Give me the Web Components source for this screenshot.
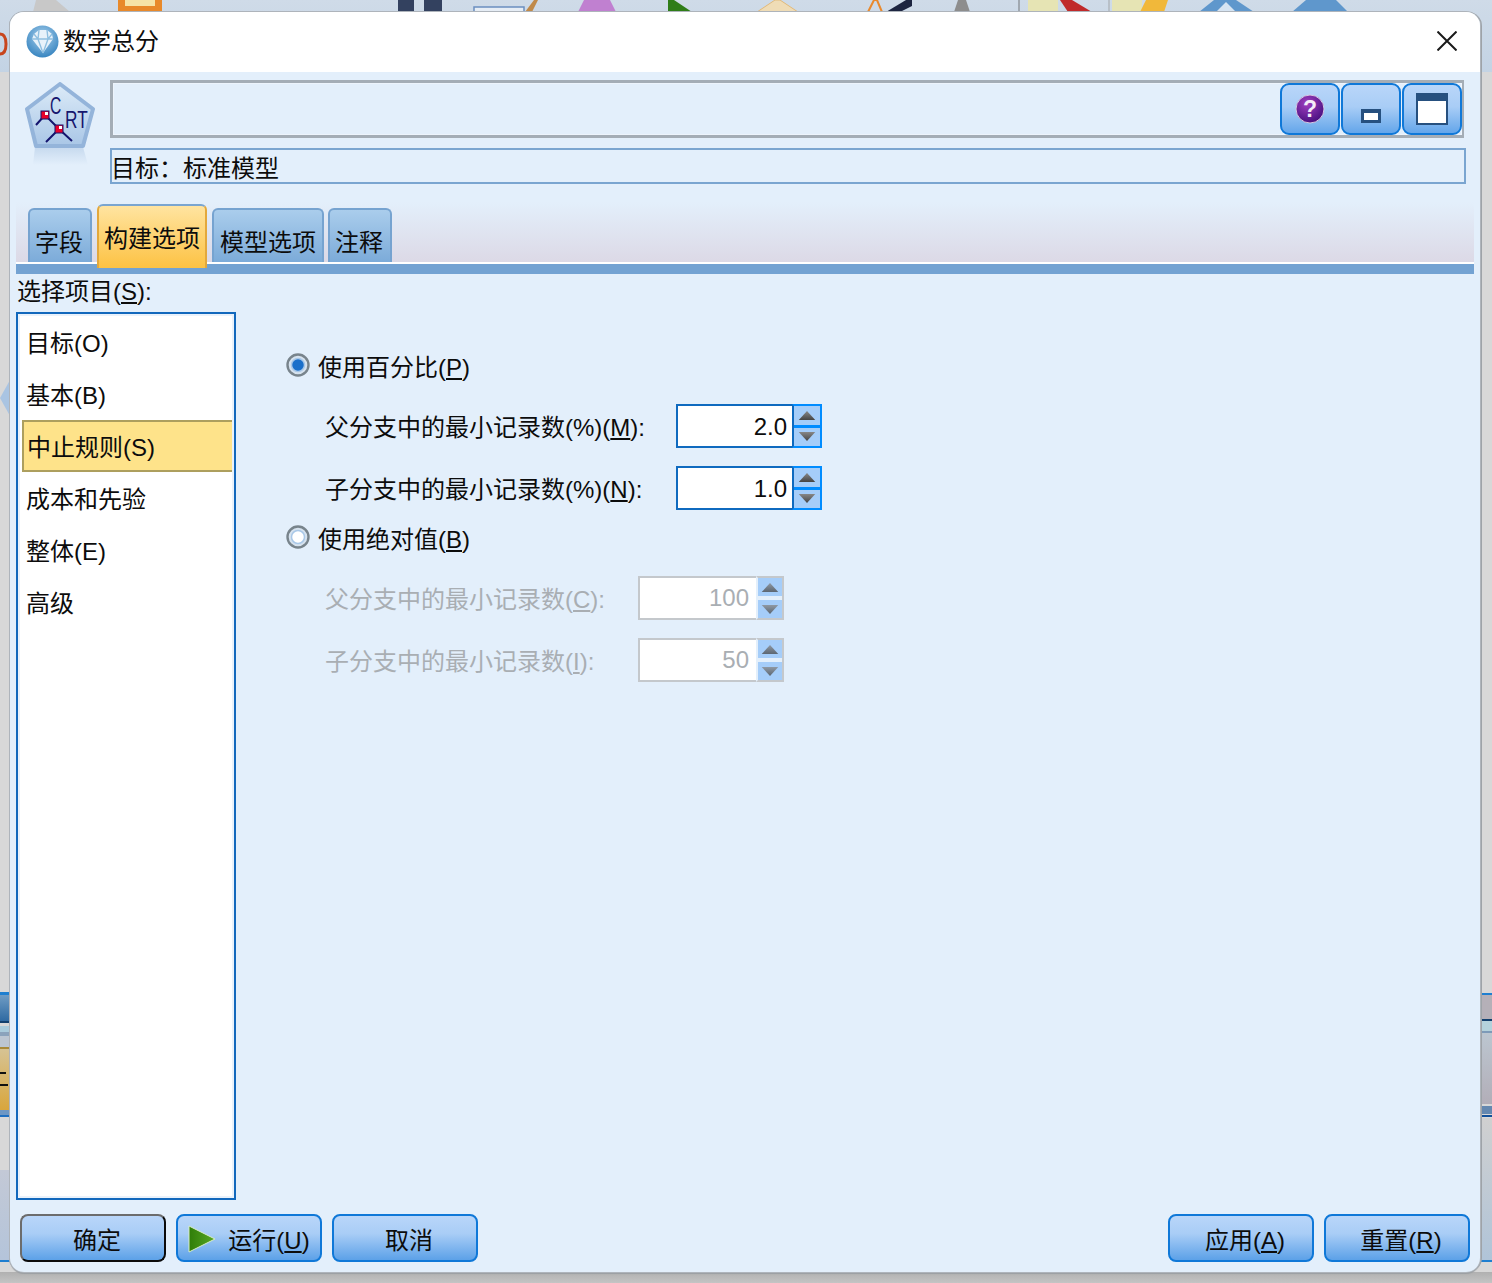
<!DOCTYPE html>
<html lang="zh">
<head>
<meta charset="utf-8">
<title>数学总分</title>
<style>
  html, body { margin: 0; height: 100%; }
  body {
    width: 1492px;
    height: 1283px;
    overflow: hidden;
    font: 24px/1.2 "Liberation Sans", "Noto Sans CJK SC", sans-serif;
    color: #0c0c0c;
  }
</style>
</head>
<body>

<app-desktop>
  <app-dialog heading="数学总分">
    <app-header slot="header" target="目标：标准模型"></app-header>
    <app-tabs slot="tabs">
      <app-tab style="padding:0 7px 0 5px">字段</app-tab>
      <app-tab active>构建选项</app-tab>
      <app-tab>模型选项</app-tab>
      <app-tab style="margin-left:-1px;padding:0 7px 0 5px">注释</app-tab>
    </app-tabs>

    <app-side-list slot="side">
      <span slot="label">选择项目(<u>S</u>):</span>
      <app-list-item>目标(O)</app-list-item>
      <app-list-item>基本(B)</app-list-item>
      <app-list-item selected>中止规则(S)</app-list-item>
      <app-list-item>成本和先验</app-list-item>
      <app-list-item>整体(E)</app-list-item>
      <app-list-item>高级</app-list-item>
    </app-side-list>

    <app-stop-rules slot="main">
      <app-radio checked>使用百分比(<u>P</u>)</app-radio>
      <app-field value="2.0" style="margin-top:22px">父分支中的最小记录数(%)(<u>M</u>):</app-field>
      <app-field value="1.0" style="margin-top:18px">子分支中的最小记录数(%)(<u>N</u>):</app-field>
      <app-radio style="margin-top:16px">使用绝对值(<u>B</u>)</app-radio>
      <app-field value="100" disabled style="margin-top:22px">父分支中的最小记录数(<u>C</u>):</app-field>
      <app-field value="50" disabled style="margin-top:18px">子分支中的最小记录数(<u>I</u>):</app-field>
    </app-stop-rules>

    <app-button slot="footer-left" default>确定</app-button>
    <app-button slot="footer-left" run>运行(<u>U</u>)</app-button>
    <app-button slot="footer-left">取消</app-button>
    <app-button slot="footer-right">应用(<u>A</u>)</app-button>
    <app-button slot="footer-right">重置(<u>R</u>)</app-button>
  </app-dialog>
</app-desktop>

<script>
// what is visible of the main window behind the dialog
const strip = (side, top, height, bg) =>
  `<div class="strip" style="${side}:0;top:${top}px;height:${height}px;background:${bg}"></div>`;

class AppDesktop extends HTMLElement {
  constructor() {
    super();
    this.attachShadow({ mode: "open" });
    this.shadowRoot.innerHTML = `
      <style>
        :host { display: block; position: relative; width: 1492px; height: 1283px; overflow: hidden;
          background: #d8d8d8; }
        .toolbar { position: absolute; left: 0; top: 0; width: 1492px; height: 72px;
          background: linear-gradient(#cfdbe8, #c3d3e4); }
        .bottom { position: absolute; left: 0; right: 0; top: 1272px; height: 11px; background: linear-gradient(#b0b0b0, #c4c4c4); }
        .strip { position: absolute; width: 12px; }
        .top-art { position: absolute; left: 0; top: 0; }
        ::slotted(*) { position: absolute; left: 10px; top: 12px; }
      </style>
      <div class="toolbar"></div>
      <div class="bottom"></div>
      ${strip("left", 992, 3, "#1f7fd0")}
      ${strip("left", 995, 26, "linear-gradient(#6f9cc4,#2f6aa2)")}
      ${strip("left", 1021, 2, "#12406e")}
      ${strip("left", 1026, 6, "#a9cbdc")}
      ${strip("left", 1032, 4, "#8ba3bc")}
      ${strip("left", 1036, 11, "#bcc6d2")}
      ${strip("left", 1047, 2, "#a98a3a")}
      ${strip("left", 1049, 61, "linear-gradient(#d6c394,#d9a63c)")}
      ${strip("left", 1110, 5, "#6d97c4")}
      ${strip("left", 1115, 2, "#1f6fc0")}
      ${strip("left", 1170, 90, "linear-gradient(#c3c9d6,#b4c4da)")}
      ${strip("left", 1260, 2, "#1f7fd0")}
      ${strip("right", 993, 2, "#1f7fd0")}
      ${strip("right", 995, 24, "#b5b0b8")}
      ${strip("right", 1019, 2, "#12406e")}
      ${strip("right", 1021, 10, "#b4d2dc")}
      ${strip("right", 1031, 2, "#7d9ab8")}
      ${strip("right", 1033, 71, "linear-gradient(#bcc6d0,#b2aeb8)")}
      ${strip("right", 1104, 2, "#d8d8d8")}
      ${strip("right", 1106, 8, "#6488b0")}
      ${strip("right", 1115, 2, "#12509a")}
      ${strip("right", 1118, 142, "linear-gradient(#d0d0d0,#b0c4d8)")}
      ${strip("right", 1260, 2, "#1f7fd0")}
      <div style="position:absolute;left:0;top:1072px;width:6px;height:2px;background:#111"></div>
      <div style="position:absolute;left:0;top:1084px;width:8px;height:2px;background:#111"></div>
      <svg class="top-art" width="1492" height="13" viewBox="0 0 1492 13">
        <path d="M33 12L36 0H56L70 12Z" fill="#c8c8c8"/>
        <rect x="118" y="0" width="44" height="12" fill="#e8892a"/>
        <rect x="125" y="0" width="30" height="6" fill="#f6e3a6"/>
        <rect x="398" y="0" width="16" height="12" fill="#33415f"/>
        <rect x="424" y="0" width="18" height="12" fill="#33415f"/>
        <path d="M474 12V7H524V12Z" fill="#e6edf5" stroke="#6b8fc0" stroke-width="1.5"/>
        <path d="M525 12L534 0H538L532 12Z" fill="#c08a4a"/>
        <path d="M578 12L584 0H610L616 12Z" fill="#c080d0"/>
        <path d="M668 0H674L692 12H668Z" fill="#2f7d18"/>
        <path d="M757 12L775 0H780L798 12Z" fill="#efdcb6" stroke="#e2b978"/>
        <path d="M868 12L874 0H877L882 12" fill="none" stroke="#e98a2e" stroke-width="2"/>
        <path d="M886 12L906 0H912V6L900 12Z" fill="#1d2540"/>
        <path d="M954 12L958 0H966L970 12Z" fill="#8d8d8d"/>
        <rect x="1018" y="0" width="2" height="12" fill="#a0a8b0"/>
        <rect x="1028" y="0" width="30" height="12" fill="#e6e4b4"/>
        <path d="M1060 0H1072L1092 12H1068Z" fill="#c02a2a"/>
        <rect x="1108" y="0" width="2" height="12" fill="#b8c0c8"/>
        <rect x="1112" y="0" width="30" height="12" fill="#e6e4b4"/>
        <path d="M1140 12L1146 0H1168L1164 12Z" fill="#f1b83a"/>
        <path d="M1199 12L1214 0H1236L1254 12Z" fill="#5f97cc"/>
        <path d="M1216 12L1226 2L1236 12Z" fill="#d6e4f2"/>
        <path d="M1292 12L1306 0H1336L1348 12Z" fill="#5f97cc"/>
      </svg>
      <svg class="top-art" width="10" height="60" viewBox="0 0 10 60" style="top:30px">
        <path d="M0 4C5 4 6 10 6 14S5 24 0 24" fill="none" stroke="#c8451c" stroke-width="3"/>
      </svg>
      <svg class="top-art" width="10" height="40" viewBox="0 0 10 40" style="top:378px">
        <path d="M10 2L0 20L10 38Z" fill="#a9c4e2"/>
      </svg>
      <slot></slot>
    `;
  }
}

class AppDialog extends HTMLElement {
  constructor() {
    super();
    this.attachShadow({ mode: "open" });
    this.shadowRoot.innerHTML = `
      <style>
        :host { display: flex; flex-direction: column; width: 1470px; height: 1260px;
          border-radius: 14px; overflow: hidden; background: #e3effb;
          box-shadow: 0 0 0 1px #aeb4bb, 2px 0 0 #9ea3a8, -1px 0 0 #9ea3a8, 0 2px 1px #9a9ea2; }
        .titlebar { flex: none; height: 60px; box-sizing: border-box; background: #fff; display: flex; align-items: center; padding: 0 23px 2px 16px; }
        .titlebar svg.logo { width: 33px; height: 33px; margin-right: 4px; }
        .titlebar svg.close { margin-top: -1px; }
        .heading { flex: 1; margin-top: 2px; }
        .body { flex: 1; display: flex; flex-direction: column; min-height: 0; }
        .middle { flex: 1; display: flex; min-height: 0; padding: 6px 6px 0 6px; }
        .footer { flex: none; display: flex; justify-content: space-between; height: 72px; padding: 14px 10px 0 10px; box-sizing: border-box; }
        .footer > div { display: flex; gap: 10px; }
        ::slotted([slot="main"]) { flex: 1; }
      </style>
      <div class="titlebar">
        <svg class="logo" viewBox="0 0 33 33">
          <defs><radialGradient id="g" cx=".5" cy=".35" r=".7"><stop offset="0" stop-color="#a9d0ec"/><stop offset="1" stop-color="#2f7fbd"/></radialGradient></defs>
          <circle cx="16.5" cy="16.5" r="16" fill="url(#g)"/>
          <path d="M8 9L13 5H21L26 9L27 14L17 28L6 14Z" fill="#e8f2fa"/>
          <path d="M17 28L12 14L8 9M17 28L22 14L26 9M12 14H22M13 5L12 14M21 5L22 14M6 14H27" fill="none" stroke="#8fbfe0" stroke-width="1.4"/>
        </svg>
        <span class="heading"></span>
        <svg class="close" width="20" height="20" viewBox="0 0 20 20"><path d="M0.5 0.5L19.5 19.5M19.5 0.5L0.5 19.5" stroke="#1a1a1a" stroke-width="2" fill="none"/></svg>
      </div>
      <div class="body">
        <slot name="header"></slot>
        <slot name="tabs"></slot>
        <div class="middle">
          <slot name="side"></slot>
          <slot name="main"></slot>
        </div>
        <div class="footer">
          <div><slot name="footer-left"></slot></div>
          <div><slot name="footer-right"></slot></div>
        </div>
      </div>
    `;
    this.shadowRoot.querySelector(".heading").textContent = this.getAttribute("heading") || "";
  }
}

class AppHeader extends HTMLElement {
  constructor() {
    super();
    this.attachShadow({ mode: "open" });
    this.shadowRoot.innerHTML = `
      <style>
        :host { display: flex; height: 112px; padding: 8px 14px 0 15px; box-sizing: border-box; }
        .node { width: 70px; height: 90px; margin-right: 15px; flex: none; margin-top: 2px; }
        .fields { flex: 1; display: flex; flex-direction: column; gap: 10px; }
        .name { height: 58px; box-sizing: border-box; width: 1354px; border: 3px solid #a4adb6;
          border-right-width: 2px; display: flex; justify-content: flex-end; align-items: center; gap: 1px; box-shadow: inset 0 0 0 1px #edf4fc; }
        .target { height: 36px; box-sizing: border-box; border: 2px solid #7aa5d0; line-height: 38px; text-indent: -1px; width: 1356px; }
        .tool { width: 60px; height: 52px; box-sizing: border-box; border: 2px solid #0f78d8; border-radius: 9px;
          background: linear-gradient(#b9d6f9, #a9cdf6 45%, #64a6ea);
          display: flex; align-items: center; justify-content: center; }
      </style>
      <svg class="node" viewBox="0 0 70 90">
        <defs>
          <linearGradient id="p" x1="0" y1="0" x2="0" y2="1"><stop offset="0" stop-color="#dcebf8"/><stop offset="1" stop-color="#a9c6e6"/></linearGradient>
          <linearGradient id="r" x1="0" y1="0" x2="0" y2="1"><stop offset="0" stop-color="#c6d9ee"/><stop offset="1" stop-color="#e3effb"/></linearGradient>
        </defs>
        <path d="M10 65L8 83H63L58 65Z" fill="url(#r)"/>
        <path d="M35 2L68 27L58 64H11L2 27Z" fill="url(#p)" stroke="#94b4da" stroke-width="4" stroke-linejoin="round"/>
        <text transform="translate(25 32) scale(.65 1)" font-family="Liberation Sans" font-size="24" fill="#16166e">C</text>
        <text transform="translate(40 46) scale(.72 1)" font-family="Liberation Sans" font-size="24" fill="#16166e">RT</text>
        <path d="M11 43L20 33L34 47M34 47L21 60M34 47L47 59" fill="none" stroke="#14146e" stroke-width="2"/>
        <rect x="16" y="29" width="8" height="8" fill="#e8002a" stroke="#14146e"/>
        <rect x="30" y="43" width="8" height="8" fill="#e8002a" stroke="#14146e"/>
        <rect x="20" y="30" width="3" height="3" fill="#fff"/>
        <rect x="34" y="44" width="3" height="3" fill="#fff"/>
      </svg>
      <div class="fields">
        <div class="name">
          <div class="tool">
            <svg width="30" height="30" viewBox="0 0 30 30">
              <defs><radialGradient id="q" cx=".4" cy=".3" r=".8"><stop offset="0" stop-color="#a13fc0"/><stop offset="1" stop-color="#3e0a78"/></radialGradient></defs>
              <circle cx="15" cy="15" r="14" fill="url(#q)" stroke="#d8c8e2"/>
              <text x="15" y="23" text-anchor="middle" font-family="Liberation Sans" font-weight="700" font-size="23" fill="#f4ecf8">?</text>
            </svg>
          </div>
          <div class="tool" style="align-items:flex-end;padding-bottom:10px">
            <span style="display:block;width:20px;height:14px;box-sizing:border-box;border:3px solid #26507f;border-top-width:4px;background:#fff"></span>
          </div>
          <div class="tool">
            <span style="display:block;width:32px;height:32px;box-sizing:border-box;border:2px solid #26507f;border-top-width:8px;background:#fff"></span>
          </div>
        </div>
        <div class="target"></div>
      </div>
    `;
    this.shadowRoot.querySelector(".target").textContent = this.getAttribute("target") || "";
  }
}

class AppTabs extends HTMLElement {
  constructor() {
    super();
    this.attachShadow({ mode: "open" });
    this.shadowRoot.innerHTML = `
      <style>
        :host { display: block; margin: 0 6px; height: 90px;
          background: linear-gradient(#e3effb 0, #e3effb 18px, #dcd9e6 78px); position: relative; }
        .row { display: flex; align-items: flex-end; gap: 5px; height: 78px; padding-left: 12px; box-sizing: border-box; }
        .rule { position: absolute; left: 0; right: 0; top: 78px; height: 2px; background: #fff; }
        .bar { position: absolute; left: 0; right: 0; top: 80px; height: 10px; background: #73a2d2; }
        ::slotted(*) { position: relative; z-index: 1; }
      </style>
      <div class="rule"></div>
      <div class="bar"></div>
      <div class="row"><slot></slot></div>
    `;
  }
}

class AppTab extends HTMLElement {
  constructor() {
    super();
    this.attachShadow({ mode: "open" });
    this.shadowRoot.innerHTML = `
      <style>
        :host { display: block; box-sizing: border-box; height: 54px; padding: 0 6px; line-height: 66px;
          border: 2px solid #76a3d0; border-bottom: 0; border-radius: 6px 6px 0 0;
          background: linear-gradient(#aacdec, #7cabd9); white-space: nowrap; overflow: hidden; }
        :host([active]) { height: 64px; margin-bottom: -6px; line-height: 66px; padding: 0 5px;
          border-color: #e3a83c; border-top-color: #7aa5d0; background: linear-gradient(#ffe4a0, #fdc243); }
      </style>
      <slot></slot>
    `;
  }
}

class AppSideList extends HTMLElement {
  constructor() {
    super();
    this.attachShadow({ mode: "open" });
    this.shadowRoot.innerHTML = `
      <style>
        :host { display: flex; flex-direction: column; width: 220px; flex: none; }
        .label { height: 32px; line-height: 24px; padding-left: 1px; }
        .box { flex: 1; box-sizing: border-box; border: 2px solid #1268bc; background: #fff;
          box-shadow: inset 0 0 0 2px #eaf2fb; padding: 2px 2px 0 4px; display: flex; flex-direction: column; }
      </style>
      <div class="label"><slot name="label"></slot></div>
      <div class="box"><slot></slot></div>
    `;
  }
}

class AppListItem extends HTMLElement {
  constructor() {
    super();
    this.attachShadow({ mode: "open" });
    this.shadowRoot.innerHTML = `
      <style>
        :host { display: block; flex: none; height: 52px; box-sizing: border-box; line-height: 52px;
          padding-left: 2px; border: 2px solid transparent; border-right: 0; }
        :host([selected]) { background: #fee38a; border-color: #ad9f5e; padding-left: 3px; }
      </style>
      <slot></slot>
    `;
  }
}

class AppStopRules extends HTMLElement {
  constructor() {
    super();
    this.attachShadow({ mode: "open" });
    this.shadowRoot.innerHTML = `
      <style>
        :host { display: flex; flex-direction: column; padding: 74px 0 0 50px; box-sizing: border-box; }
      </style>
      <slot></slot>
    `;
  }
}

class AppRadio extends HTMLElement {
  constructor() {
    super();
    this.attachShadow({ mode: "open" });
    this.shadowRoot.innerHTML = `
      <style>
        :host { display: flex; align-items: center; height: 28px; gap: 8px; }
        svg { flex: none; width: 24px; height: 24px; margin-top: -6px; }
      </style>
      <svg viewBox="0 0 24 24">
        <circle cx="12" cy="12" r="10.5" fill="#d6e2ee" stroke="#78848c" stroke-width="2.4"/>
        <circle class="dot" cx="12" cy="12" r="6.5" fill="#fff" stroke="#a9c8e8" stroke-width="1.5"/>
      </svg>
      <span><slot></slot></span>
    `;
  }
  connectedCallback() {
    if (this.hasAttribute("checked")) {
      this.shadowRoot.querySelector(".dot").setAttribute("fill", "#1a6fca");
    }
  }
}

class AppField extends HTMLElement {
  constructor() {
    super();
    this.attachShadow({ mode: "open" });
    this.shadowRoot.innerHTML = `
      <style>
        :host { display: flex; align-items: center; height: 44px; padding-left: 39px; }
        .label { width: 351px; flex: none; white-space: nowrap; margin-top: 4px; }
        :host([disabled]) .label { width: 313px; color: #a9aeb3; }
        .spin { display: flex; width: 146px; height: 44px; box-sizing: border-box; }
        .input { width: 116px; box-sizing: border-box; background: #fff; border: 2px solid #0f6abf; border-right: 0;
          text-align: right; padding-right: 5px; line-height: 42px; }
        :host([disabled]) .input { width: 118px; border-color: #c4c8cc; color: #a9aeb3; padding-right: 7px; line-height: 40px; }
        .arrows { flex: 1; display: flex; flex-direction: column; background: #008cff; box-sizing: border-box;
          border: 2px solid #008cff; border-left-color: #0f6abf; gap: 3px; }
        :host([disabled]) .arrows { background: #e3effb; border-color: #c4c8cc; border-left-color: #e3effb; gap: 4px; }
        .arrows div { flex: 1; background: #a5cdf9; display: flex; align-items: center; justify-content: center; }
        svg { width: 20px; height: 11px; }
        :host([disabled]) svg { opacity: .75; }
      </style>
      <div class="label"><slot></slot></div>
      <div class="spin">
        <div class="input"></div>
        <div class="arrows">
          <div><svg viewBox="0 0 20 12"><defs><linearGradient id="u" x1="0" x2="0" y1="0" y2="1"><stop offset="0" stop-color="#888"/><stop offset="1" stop-color="#444"/></linearGradient></defs><path d="M10 1L19 11H1Z" fill="url(#u)"/></svg></div>
          <div><svg viewBox="0 0 20 12"><path d="M1 1H19L10 11Z" fill="url(#u)"/></svg></div>
        </div>
      </div>
    `;
    this.shadowRoot.querySelector(".input").textContent = this.getAttribute("value") || "";
  }
}

const runIcon = `
  <svg viewBox="0 0 28 28">
    <defs><linearGradient id="run" x1="0" x2="1" y1="0" y2="0"><stop offset="0" stop-color="#2f7d08"/><stop offset="1" stop-color="#58a824"/></linearGradient></defs>
    <path d="M1 1L27 14L1 27Z" fill="url(#run)" stroke="#d8ecc8"/>
  </svg>`;

class AppButton extends HTMLElement {
  constructor() {
    super();
    this.attachShadow({ mode: "open" });
    this.shadowRoot.innerHTML = `
      <style>
        :host { display: flex; align-items: center; justify-content: center; box-sizing: border-box; width: 146px; height: 48px;
          border: 2px solid #0f78d8; border-radius: 8px; white-space: nowrap; position: relative; line-height: 48px;
          padding: 5px 0 0 8px;
          background: linear-gradient(#b9d6f9, #a9cdf6 40%, #5ca1e8); }
        :host([default]) { border-color: #6c6c6c #0b0b0b #0b0b0b #6c6c6c; }
        :host([run]) { padding-left: 40px; }
        svg { position: absolute; left: 10px; top: 9px; width: 28px; height: 28px; }
      </style>
      ${this.hasAttribute("run") ? runIcon : ""}
      <slot></slot>
    `;
  }
}

customElements.define("app-desktop", AppDesktop);
customElements.define("app-dialog", AppDialog);
customElements.define("app-header", AppHeader);
customElements.define("app-tabs", AppTabs);
customElements.define("app-tab", AppTab);
customElements.define("app-side-list", AppSideList);
customElements.define("app-list-item", AppListItem);
customElements.define("app-stop-rules", AppStopRules);
customElements.define("app-radio", AppRadio);
customElements.define("app-field", AppField);
customElements.define("app-button", AppButton);
</script>
</body>
</html>
